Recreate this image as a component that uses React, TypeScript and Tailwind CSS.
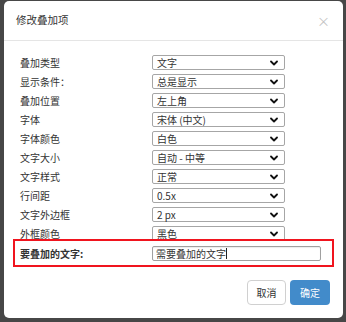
import React from "react"

const rows = [
    { label: "叠加类型", value: "文字" },
    { label: "显示条件：", value: "总是显示" },
    { label: "叠加位置", value: "左上角" },
    { label: "字体", value: "宋体 (中文)" },
    { label: "字体颜色", value: "白色" },
    { label: "文字大小", value: "自动 - 中等" },
    { label: "文字样式", value: "正常" },
    { label: "行间距", value: "0.5x" },
    { label: "文字外边框", value: "2 px" },
    { label: "外框颜色", value: "黑色" },
]

const Chevron: React.FC = () => (
    <svg width="8" height="6" viewBox="0 0 8 6" className="shrink-0">
        <path d="M1 1.5 L4 4.5 L7 1.5" fill="none" stroke="#111" strokeWidth="1.8" strokeLinecap="round" strokeLinejoin="round" />
    </svg>
)

const App: React.FC = () => {
    return (
        <div
            className="w-[346px] h-[322px] bg-[#474747] pl-[4px] pt-[1px] overflow-hidden text-[#333]"
            style={{ fontFamily: '"Noto Sans CJK SC", "Noto Sans", sans-serif' }}
        >
            <div className="w-[339px] h-[317px] bg-white rounded-[5px] flex flex-col">
                {/* Header */}
                <div className="h-[40px] shrink-0 border-b border-[#e5e5e5] flex items-center justify-between pl-[12px] pr-[13px]">
                    <span className="text-[10.5px] leading-none">修改叠加项</span>
                    <span className="text-[#c4c4c4] text-[13px] leading-none">×</span>
                </div>

                {/* Body */}
                <div className="flex flex-col gap-[4px] pt-[14px]">
                    {rows.map((r) => (
                        <div key={r.label} className="flex items-center h-[15px] pl-[16px]">
                            <span className="w-[132px] text-[10px] leading-none">{r.label}</span>
                            <div className="w-[133px] h-[15px] border border-[#a6a6a6] rounded-[2px] flex items-center justify-between pl-[4px] pr-[6px]">
                                <span className="text-[10px] leading-none">{r.value}</span>
                                <Chevron />
                            </div>
                        </div>
                    ))}
                </div>

                {/* Highlighted text row */}
                <div className="ml-[9px] mr-[9px] -mt-[2px] border-2 border-[#f0141e] flex items-center pl-[5px] pr-[11px] pt-[5px] pb-[4px]">
                    <span className="w-[132px] text-[10px] leading-none font-bold text-[#333]">要叠加的文字:</span>
                    <div className="flex-1 h-[15px] border border-[#a0a0a0] rounded-[2px] flex items-center pl-[3px] shadow-[inset_0_1px_1px_rgba(0,0,0,0.08)]">
                        <span className="text-[10px] leading-none">需要叠加的文字</span>
                        <span className="w-px h-[11px] bg-[#222]"></span>
                    </div>
                </div>

                {/* Footer */}
                <div className="flex justify-end gap-[4px] pr-[13px] mt-[13px]">
                    <button className="w-[39px] h-[25px] border border-[#d0d0d0] rounded-[4px] bg-white text-[10px] text-[#333]">取消</button>
                    <button className="w-[40px] h-[25px] rounded-[4px] bg-[#428bca] text-[10px] text-white">确定</button>
                </div>
            </div>
        </div>
    )
}

export default App
